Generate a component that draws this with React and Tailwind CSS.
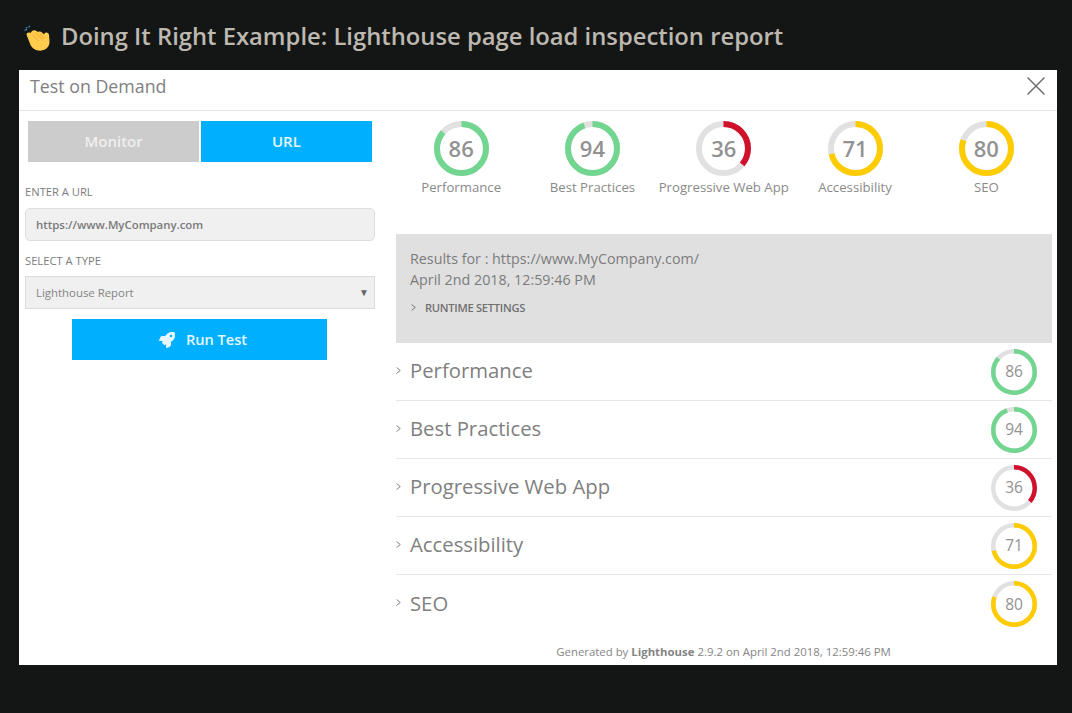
import React from 'react';
import { FaRocket } from 'react-icons/fa';

const SCORES = [
  { name: 'Performance', score: 86, color: '#72d691' },
  { name: 'Best Practices', score: 94, color: '#72d691' },
  { name: 'Progressive Web App', score: 36, color: '#d0112b' },
  { name: 'Accessibility', score: 71, color: '#ffcc00' },
  { name: 'SEO', score: 80, color: '#ffcc00' },
];

function Ring({ size, stroke, score, color, textClass }) {
  const r = (size - stroke) / 2;
  const c = 2 * Math.PI * r;
  return (
    <div className="relative shrink-0" style={{ width: size, height: size }}>
      <svg width={size} height={size} className="-rotate-90 block">
        <circle cx={size / 2} cy={size / 2} r={r} fill="none" stroke="#e1e1e1" strokeWidth={stroke} />
        <circle cx={size / 2} cy={size / 2} r={r} fill="none" stroke={color} strokeWidth={stroke}
          strokeDasharray={`${(c * score) / 100} ${c}`} />
      </svg>
      <div className={`absolute inset-0 flex items-center justify-center text-[#929292] ${textClass}`}>{score}</div>
    </div>
  );
}

function Chevron({ className, size = 8 }) {
  return (
    <svg width={size} height={size} viewBox="0 0 8 8" className={className} fill="none" stroke="currentColor" strokeWidth="1.100">
      <path d="M1.800 0.600 L6 4 L1.800 7.400" />
    </svg>
  );
}

function Clap() {
  return (
    <svg width="28" height="28" viewBox="0 0 28 30" preserveAspectRatio="none" className="shrink-0 mt-[8px]">
      <path d="M5.500 2.500 L7 1 M1.500 6 L4 4.500 M3 3.500 L4.200 2.300" stroke="#3b88c3" strokeWidth="1.300" fill="none" />
      <path d="M3.500 10.500 C3.500 8.500 5.500 7.500 7.500 8.500 L9 6.500 C10.500 5 12.500 5.500 13.500 6.500 L15 7.500 C16.500 6.500 18 7 19 8 L21 10 L22 8.500 C23.500 7.500 25.500 8.500 26 10.500 L26.500 17 C27 23 23 27.500 17.500 27.500 C12 27.500 9.500 25 7.500 21.500 Z" fill="#ffcc4d" />
      <path d="M9 10 L15.500 17 M12.500 8 L19 15.500 M16.500 8.500 L21.500 15" stroke="#f4a52e" strokeWidth="1" fill="none" />
    </svg>
  );
}

export default function App() {
  return (
    <div className="w-[1072px] h-[713px] overflow-hidden bg-[#141616] font-['Open_Sans',sans-serif]">
      <div className="h-[70px] pl-[23px] flex items-center gap-[10px]">
        <Clap />
        <h1 className="mt-[3px] text-[23.800px] font-semibold text-[#bdb8b0] leading-none">Doing It Right Example: Lighthouse page load inspection report</h1>
      </div>

      <div className="ml-[19px] w-[1038px] h-[595px] bg-white flex flex-col">
        <div className="h-[41px] shrink-0 border-b border-[#e6e6e6] flex items-center justify-between pl-[11px] pr-[12px] pb-[8px]">
          <span className="text-[17.800px] text-[#808080]">Test on Demand</span>
          <svg width="18" height="18" viewBox="0 0 18 18" stroke="#707070" strokeWidth="1.500" fill="none" className="mt-[-1px]">
            <path d="M0.500 0.500 L17.500 17.500 M17.500 0.500 L0.500 17.500" />
          </svg>
        </div>

        <div className="flex flex-1">
          <div className="w-[362px] shrink-0 px-[6px] pt-[10px] flex flex-col">
            <div className="flex mx-[3px] gap-[1.500px] h-[41px]">
              <div className="flex-1 bg-[#cccccc] text-white/70 text-[15px] font-semibold flex items-center justify-center">Monitor</div>
              <div className="flex-1 bg-[#00b0ff] text-white/90 text-[15px] font-semibold flex items-center justify-center">URL</div>
            </div>
            <label className="mt-[22px] text-[11.200px] leading-[15px] text-[#7d7d7d]">ENTER A URL</label>
            <div className="mt-[9px] h-[33px] rounded-[5px] border border-[#dedede] bg-[#f0f0f0] pl-[10px] flex items-center text-[11.400px] font-semibold text-[#7a7a7a]">https://www.MyCompany.com</div>
            <label className="mt-[12px] text-[11.200px] leading-[15px] text-[#7d7d7d]">SELECT A TYPE</label>
            <div className="mt-[8px] h-[33px] border border-[#dcdcdc] bg-[#f0f0f0] pl-[10px] pr-[5px] flex items-center justify-between text-[11.400px] text-[#858585]">
              <span className="pt-[1px]">Lighthouse Report</span>
              <span className="text-[10px] text-[#666666]">▼</span>
            </div>
            <div className="mt-[10px] ml-[47px] w-[255px] h-[41px] bg-[#00b0ff] text-white/90 pl-[7px] flex items-center justify-center gap-[11px] text-[14.600px] font-semibold">
              <FaRocket size={16} />
              <span>Run Test</span>
            </div>
          </div>

          <div className="flex-1 min-w-0 pl-[15px] pr-[5px] flex flex-col">
            <div className="grid grid-cols-5 pt-[10px] h-[123px] shrink-0 ml-[-0.500px]">
              {SCORES.map((s) => (
                <div key={s.name} className="flex flex-col items-center">
                  <Ring size={55} stroke={6} score={s.score} color={s.color} textClass="text-[22px] font-semibold" />
                  <div className="mt-[2px] text-[13.200px] leading-[18px] text-[#8a8a8a] whitespace-nowrap">{s.name}</div>
                </div>
              ))}
            </div>

            <div className="h-[109px] shrink-0 bg-[#e0e0e0] pl-[14px] pt-[14px] text-[#7c7c7c]">
              <div className="text-[14.300px] leading-[21px]">Results for : https://www.MyCompany.com/</div>
              <div className="text-[14.300px] leading-[21px]">April 2nd 2018, 12:59:46 PM</div>
              <div className="mt-[10px] flex items-center gap-[8px] text-[11.200px] leading-[15px] font-semibold tracking-[-0.3px] text-[#707070]">
                <Chevron size={7} />
                <span>RUNTIME SETTINGS</span>
              </div>
            </div>

            {SCORES.map((s, i) => (
              <div key={s.name} className={`h-[58px] shrink-0 flex items-center justify-between pr-[15px] ${i < 4 ? 'border-b border-[#e6e6e6]' : ''}`}>
                <div className="flex items-center gap-[8px] text-[#7a7a7a] pb-[3px] ml-[-1px]">
                  <Chevron size={7} />
                  <span className="text-[20.300px] leading-[28px] text-[#808080]">{s.name}</span>
                </div>
                <Ring size={46} stroke={4.500} score={s.score} color={s.color} textClass="text-[15.500px] pt-[1px]" />
              </div>
            ))}

            <div className="mt-[11px] text-center text-[11.400px] leading-[15px] text-[#858585] pr-[1px]">
              Generated by <span className="font-bold">Lighthouse</span> 2.9.2 on April 2nd 2018, 12:59:46 PM
            </div>
          </div>
        </div>
      </div>
    </div>
  );
}
